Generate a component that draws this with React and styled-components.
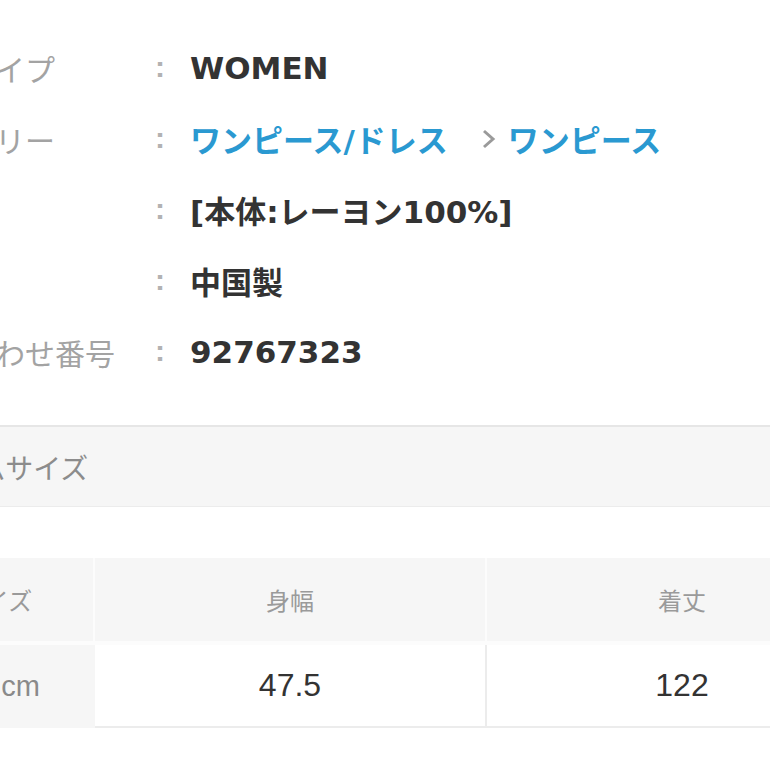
import styled, { createGlobalStyle } from "styled-components";

const GlobalStyle = createGlobalStyle`
  html, body {
    margin: 0;
    padding: 0;
    background: #fff;
    overflow: hidden;
  }
`;

const specs = [
  { label: "性別タイプ", value: "WOMEN" },
  { label: "カテゴリー", links: ["ワンピース/ドレス", "ワンピース"] },
  { label: "素材", value: "[本体:レーヨン100%]" },
  { label: "原産国", value: "中国製" },
  { label: "問い合わせ番号", value: "92767323" },
];

const sizes = [
  { name: "身幅", value: "47.5" },
  { name: "着丈", value: "122" },
];

const App = () => {
  return (
    <Page>
      <GlobalStyle />
      <SpecList>
        {specs.map((s) => (
          <SpecRow key={s.label}>
            <Label>{s.label}</Label>
            <Colon>:</Colon>
            {s.links ? (
              <Value>
                <Link>{s.links[0]}</Link>
                <Chevron width="15" height="22" viewBox="0 0 15 22">
                  <polyline points="3,3 12,11 3,19" fill="none" stroke="#9a9a9a" strokeWidth="3" />
                </Chevron>
                <Link>{s.links[1]}</Link>
              </Value>
            ) : (
              <Value>{s.value}</Value>
            )}
          </SpecRow>
        ))}
      </SpecList>

      <SectionHead>アイテムサイズ</SectionHead>

      <SizeTable>
        <HeadCell>サイズ</HeadCell>
        {sizes.map((c) => (
          <HeadCell key={c.name}>{c.name}</HeadCell>
        ))}
        <UnitCell>cm</UnitCell>
        {sizes.map((c, i) => (
          <DataCell key={c.name} $divider={i > 0}>
            {c.value}
          </DataCell>
        ))}
      </SizeTable>
    </Page>
  );
};

export default App;

const Page = styled.div`
  width: 990px;
  margin-left: -110px;
  padding-top: 32px;
  font-family: "Noto Sans CJK JP", sans-serif;
`;

const SpecList = styled.div`
  padding-left: 15px;
`;

const SpecRow = styled.div`
  display: grid;
  grid-template-columns: 245px 40px 1fr;
  align-items: center;
  height: 71px;
`;

const Label = styled.div`
  font-size: 30px;
  color: #a3a3a3;
  white-space: nowrap;
  overflow: hidden;
`;

const Colon = styled.div`
  font-family: "Liberation Sans", sans-serif;
  font-weight: 700;
  font-size: 30px;
  color: #b2b2b2;
  padding-left: 5px;
  margin-top: -2px;
`;

const Value = styled.div`
  display: flex;
  align-items: center;
  font-family: "DejaVu Sans", "Noto Sans CJK JP", sans-serif;
  font-weight: 700;
  font-size: 31px;
  color: #333;
  white-space: nowrap;
`;

const Link = styled.span`
  color: #2a99d1;
`;

const Chevron = styled.svg`
  margin: 0 12px 0 33px;
`;

const SectionHead = styled.div`
  margin-top: 38px;
  height: 79px;
  display: flex;
  align-items: center;
  padding-left: 6px;
  background: #f6f6f6;
  border-top: 2px solid #e6e6e6;
  border-bottom: 1px solid #ececec;
  font-size: 28px;
  color: #8c8c8c;
`;

const SizeTable = styled.div`
  margin: 51px 0 0 10px;
  display: grid;
  grid-template-columns: 193px 390px 390px;
  grid-auto-rows: 83px;
  row-gap: 4px;
  column-gap: 2px;
  background: #fcfcfc;
`;

const HeadCell = styled.div`
  display: flex;
  align-items: center;
  justify-content: center;
  background: #f6f6f6;
  font-size: 24px;
  color: #9a9a9a;
`;

const UnitCell = styled.div`
  display: flex;
  align-items: center;
  justify-content: flex-end;
  padding-right: 55px;
  background: #f6f6f6;
  font-family: "Liberation Sans", "Noto Sans CJK JP", sans-serif;
  font-size: 29px;
  color: #8a8a8a;
  margin-right: -2px;
`;

const DataCell = styled.div`
  display: flex;
  align-items: center;
  justify-content: center;
  background: #fff;
  border-bottom: 2px solid #ececec;
  border-left: ${(p) => (p.$divider ? "2px solid #ececec" : "none")};
  margin-left: ${(p) => (p.$divider ? "-2px" : "0")};
  font-family: "Liberation Sans", sans-serif;
  font-size: 32px;
  color: #333;
`;
